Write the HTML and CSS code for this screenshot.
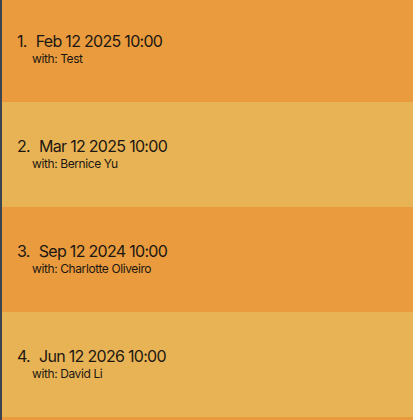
FILE: index.html
```html
<!DOCTYPE html>
<html>
<head>
<meta charset="utf-8">
<link rel="stylesheet" href="styles.css">
</head>
<body>
<div class="list">
  <div class="row dark">
    <div class="title"><span class="num">1.</span><span>Feb 12 2025 10:00</span></div>
    <div class="sub">with: Test</div>
  </div>
  <div class="row light">
    <div class="title"><span class="num">2.</span><span>Mar 12 2025 10:00</span></div>
    <div class="sub">with: Bernice Yu</div>
  </div>
  <div class="row dark">
    <div class="title"><span class="num">3.</span><span>Sep 12 2024 10:00</span></div>
    <div class="sub">with: Charlotte Oliveiro</div>
  </div>
  <div class="row light">
    <div class="title"><span class="num">4.</span><span>Jun 12 2026 10:00</span></div>
    <div class="sub">with: David Li</div>
  </div>
  <div class="row dark stub"></div>
</div>
</body>
</html>
```
FILE: styles.css
```css
html, body {
  margin: 0;
  padding: 0;
  height: 100%;
  overflow: hidden;
}
body {
  font-family: Inter, "Noto Sans", sans-serif;
  color: #1c1712;
  border-left: 2px solid #3b4250;
  box-sizing: border-box;
}
.list {
  margin-top: -3px;
  display: flex;
  flex-direction: column;
}
.row {
  height: 105px;
  box-sizing: border-box;
  padding: 34px 0 0 15px;
}
.stub { height: 6px; padding: 0; }
.dark { background: #e99b3d; }
.light { background: #e8b355; }
.title {
  font-size: 16px;
  line-height: 20px;
  letter-spacing: -0.7px;
  display: flex;
  gap: 9px;
}
.sub {
  font-size: 12px;
  line-height: 16px;
  padding-left: 15px;
  letter-spacing: -0.4px;
}
```
